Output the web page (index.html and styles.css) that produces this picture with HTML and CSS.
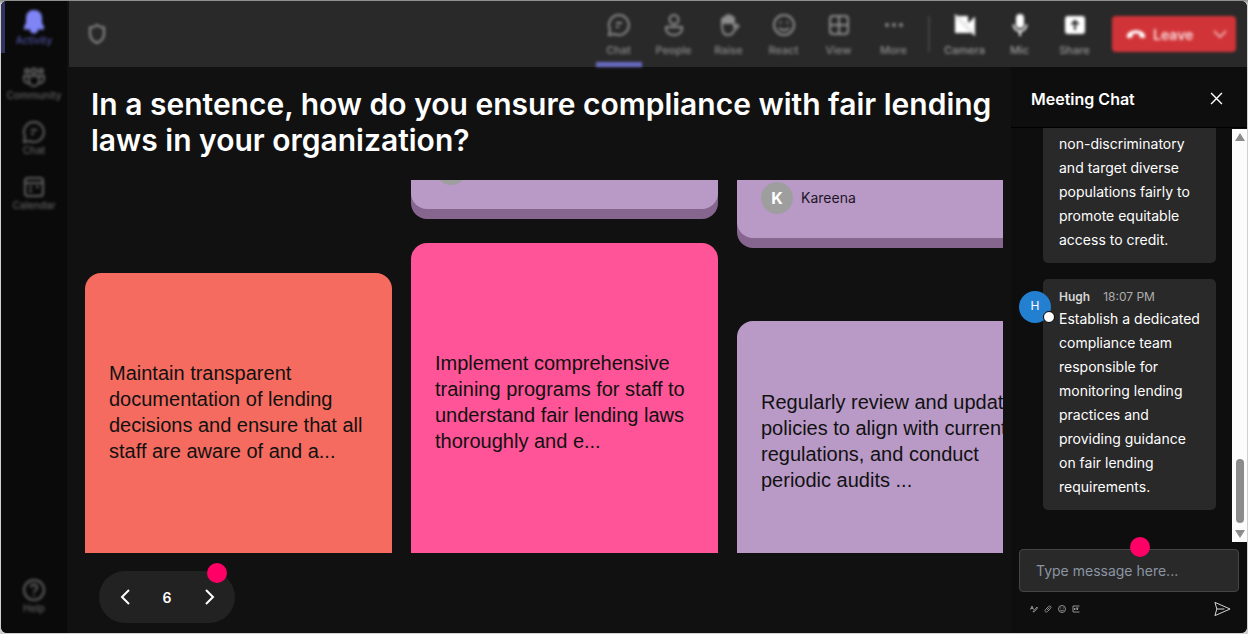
FILE: index.html
```html
<!DOCTYPE html>
<html lang="en">
<head>
    <meta charset="UTF-8">
    <meta name="viewport" content="width=device-width, initial-scale=1.0">
    <title>Meeting</title>
    <link rel="stylesheet" href="styles.css">
</head>
<body>
    <div class="app">
        <!-- Left rail -->
        <nav class="sidebar">
            <button class="nav-item active">
                <svg class="icon" viewBox="0 0 24 24"><path class="fill" d="M12 1C7.500 1 5 4 5 8v5l-2 4v1.500h18V17l-2-4V8c0-4-2.500-7-7-7zM9 19.500h6a3 3 0 0 1-6 0z"/></svg>
                <span>Activity</span>
            </button>
            <button class="nav-item">
                <svg class="icon" viewBox="0 0 24 24"><circle cx="5" cy="6" r="2"/><circle cx="12" cy="6" r="2.500"/><circle cx="19" cy="6" r="2"/><path d="M7 11h10v5a5 5 0 0 1-10 0zM7 11H2v3a4 4 0 0 0 5 4M17 11h5v3a4 4 0 0 1-5 4"/></svg>
                <span>Community</span>
            </button>
            <button class="nav-item">
                <svg class="icon" viewBox="0 0 24 24"><path d="M12 2a10 10 0 1 1-4.500 19L2 22l1-5.500A10 10 0 0 1 12 2zM9 10h6M9 14h3"/></svg>
                <span>Chat</span>
            </button>
            <button class="nav-item">
                <svg class="icon" viewBox="0 0 24 24"><rect x="3" y="3" width="18" height="18" rx="3"/><path d="M3 8h18M7 12h3M14 12h3M7 16h3"/></svg>
                <span>Calendar</span>
            </button>
            <button class="nav-item help">
                <svg class="icon" viewBox="0 0 24 24"><circle cx="12" cy="12" r="10"/><path d="M9 9.500a3 3 0 1 1 4.500 2.500c-1 .600-1.500 1-1.500 2.500M12 16.500v1.500"/></svg>
                <span>Help</span>
            </button>
        </nav>

        <div class="content">
            <header class="topbar">
                <svg class="icon shield" viewBox="0 0 24 24"><path d="M12 3c2.500 2 4.500 2.500 7 2.500V12c0 5-2.500 7-7 9-4.500-2-7-4-7-9V5.500C7.500 5.500 9.500 5 12 3z"/></svg>
                <div class="tools">
                    <button class="tool selected">
                        <svg class="icon" viewBox="0 0 24 24"><path d="M12 2a10 10 0 1 1-4.500 19L2 22l1-5.500A10 10 0 0 1 12 2zM9 10h6M9 14h3"/></svg>
                        <span>Chat</span>
                    </button>
                    <button class="tool">
                        <svg class="icon" viewBox="0 0 24 24"><circle cx="12" cy="6.500" r="4.500"/><path d="M4 14h16v2c0 4-4 6-8 6s-8-2-8-6z"/></svg>
                        <span>People</span>
                    </button>
                    <button class="tool">
                        <svg class="icon" viewBox="0 0 24 24"><path d="M5 13V7h12v7l3-2.500 1.500 1.500-4.500 5c-1.500 3-3 4-6 4-4 0-6-3-6-9z"/><path class="fill" d="M5 10V6l3-2 3-2 3 1 3 2v5z"/></svg>
                        <span>Raise</span>
                    </button>
                    <button class="tool">
                        <svg class="icon" viewBox="0 0 24 24"><circle cx="12" cy="12" r="10"/><path d="M8.500 8.500v2M15.500 8.500v2M7 15c3 3 7 3 10 0"/></svg>
                        <span>React</span>
                    </button>
                    <button class="tool">
                        <svg class="icon" viewBox="0 0 24 24"><rect x="3" y="3" width="18" height="18" rx="3"/><path d="M12 3v18M3 12h18"/></svg>
                        <span>View</span>
                    </button>
                    <button class="tool">
                        <svg class="icon" viewBox="0 0 24 24"><g class="fill"><circle cx="5" cy="12" r="1"/><circle cx="12" cy="12" r="1"/><circle cx="19" cy="12" r="1"/></g></svg>
                        <span>More</span>
                    </button>
                    <i class="divider"></i>
                    <button class="tool device">
                        <svg class="icon" viewBox="0 0 24 24"><path class="fill" d="M7 4h7v6l2 1 5-5v12zM3 6l13 13H3z"/><path d="M2 2l20 20"/></svg>
                        <span>Camera</span>
                    </button>
                    <button class="tool device">
                        <svg class="icon" viewBox="0 0 24 24"><rect class="fill" x="9" y="2" width="6" height="12" rx="3"/><path d="M5.500 11.500a6.500 6.500 0 0 0 13 0M12 18v5"/></svg>
                        <span>Mic</span>
                    </button>
                    <button class="tool device">
                        <svg class="icon" viewBox="0 0 24 24"><rect class="fill" x="3" y="4" width="18" height="16" rx="2"/><path class="cut" d="M12 17V8M8.500 11.500L12 8l3.500 3.500"/></svg>
                        <span>Share</span>
                    </button>
                    <button class="leave">
                        <svg class="phone" viewBox="0 0 24 24"><path d="M1 15c0-10 22-10 22 0l-1 2-6-1v-4c-3-1-5-1-8 0v4l-6 1z"/></svg>
                        <span>Leave</span>
                        <svg class="caret" viewBox="0 0 14 14"><path d="M1 4l6 6 6-6"/></svg>
                    </button>
                </div>
            </header>

            <div class="stage">
                <main class="board-area">
                    <h1>In a sentence, how do you ensure compliance with fair lending laws in your organization?</h1>
                    <section class="board">
                        <div class="column first">
                            <article class="card coral">
                                <p>Maintain transparent documentation of lending decisions and ensure that all staff are aware of and a...</p>
                            </article>
                        </div>
                        <div class="column second">
                            <article class="card-end short">
                                <div class="avatar"></div>
                            </article>
                            <article class="card pink">
                                <p>Implement comprehensive training programs for staff to understand fair lending laws thoroughly and e...</p>
                            </article>
                        </div>
                        <div class="column third">
                            <article class="card-end">
                                <div class="avatar">K</div>
                                <span>Kareena</span>
                            </article>
                            <article class="card lilac">
                                <p>Regularly review and update policies to align with current regulations, and conduct periodic audits ...</p>
                            </article>
                        </div>
                    </section>
                    <div class="pager">
                        <button aria-label="Previous"><svg viewBox="0 0 16 16"><path d="M12 1L5 8l7 7"/></svg></button>
                        <span>6</span>
                        <button aria-label="Next"><svg viewBox="0 0 16 16"><path d="M5 1l7 7-7 7"/></svg></button>
                        <i class="hotspot"></i>
                    </div>
                </main>

                <aside class="chat">
                    <div class="chat-header">
                        <h2>Meeting Chat</h2>
                        <button aria-label="Close"><svg viewBox="0 0 12 12"><path d="M1 1l10 10M11 1L1 11"/></svg></button>
                    </div>
                    <div class="chat-body">
                        <div class="messages">
                            <div class="message">
                                <p>non-discriminatory and target diverse populations fairly to promote equitable access to credit.</p>
                            </div>
                            <div class="message">
                                <div class="chat-avatar">H</div>
                                <div class="meta"><b>Hugh</b><time>18:07 PM</time></div>
                                <p>Establish a dedicated compliance team responsible for monitoring lending practices and providing guidance on fair lending requirements.</p>
                            </div>
                        </div>
                        <div class="scrollbar">
                            <svg viewBox="0 0 10 8"><path d="M5 0l5 8H0z"/></svg>
                            <div class="thumb"></div>
                            <svg viewBox="0 0 10 8"><path d="M5 8l5-8H0z"/></svg>
                        </div>
                    </div>
                    <div class="composer">
                        <input type="text" placeholder="Type message here..." aria-label="Type message here">
                        <i class="hotspot"></i>
                        <div class="composer-tools">
                            <button aria-label="Format"><svg viewBox="0 0 16 16"><path d="M1 9l3-7 3 7M2 7h4M6 14l2-3 6-7 1 2-6 7z"/></svg></button>
                            <button aria-label="Attach"><svg viewBox="0 0 16 16"><path d="M3 9l6-6c3-3 7 1 4 4l-6 6c-3 3-7-1-4-4zM6 10l5-5"/></svg></button>
                            <button aria-label="Emoji"><svg viewBox="0 0 16 16"><circle cx="8" cy="8" r="7"/><path d="M5.500 5v2M10.500 5v2M4.500 10c2 2 5 2 7 0"/></svg></button>
                            <button aria-label="GIF"><svg viewBox="0 0 16 16"><path d="M15 2H2v12h13M5 6v4M8 6v4M8 6h5M11 6v4"/></svg></button>
                            <button class="send" aria-label="Send"><svg viewBox="0 0 18 16"><path d="M1 1l16 7L1 15l2-7zM3 8h8"/></svg></button>
                        </div>
                    </div>
                </aside>
            </div>
        </div>
    </div>
</body>
</html>
```

FILE: styles.css
```css
*,
*::before,
*::after {
    box-sizing: border-box;
}

body {
    margin: 0;
    background: linear-gradient(#858787, #d0d0d0 4px);
    font-family: Inter, "Liberation Sans", sans-serif;
    color: #fff;
}

h1, h2, p {
    margin: 0;
}

button {
    padding: 0;
    border: none;
    background: none;
    color: inherit;
    font-family: inherit;
    cursor: pointer;
}

svg {
    display: block;
    fill: none;
    stroke: currentColor;
    stroke-width: 2;
}

.app {
    display: flex;
    height: 100vh;
    border: 1px solid transparent;
    border-radius: 7px;
    background: #111;
    background-clip: padding-box;
    overflow: hidden;
}

.icon {
    width: 24px;
    height: 24px;
}

.fill {
    fill: currentColor;
}

.cut {
    stroke: #292929;
}

/* Left rail */
.sidebar {
    display: flex;
    flex-direction: column;
    width: 66px;
    padding-bottom: 9px;
    background: #0a0a0a;
    color: #606060;
}

.nav-item {
    display: flex;
    flex-direction: column;
    align-items: center;
    height: 55px;
    padding-top: 9px;
    font-size: 10px;
    font-weight: 500;
    line-height: 12px;
}

.nav-item .icon,
.nav-item span,
.tools,
.shield {
    filter: blur(1.4px);
}

.nav-item.active {
    border-left: 4px solid #33335f;
    padding-right: 4px;
    height: 52px;
    margin-bottom: 3px;
    color: #4f50a0;
}

.nav-item.active .icon {
    color: #7f85f5;
}

.nav-item.help {
    margin-top: auto;
}

.content {
    flex: 1;
    min-width: 0;
    display: flex;
    flex-direction: column;
}

/* Top bar */
.topbar {
    display: flex;
    align-items: center;
    justify-content: space-between;
    height: 66px;
    padding: 0 11px 0 16px;
    margin-left: 2px;
    background: #292929;
    color: #8c8c8c;
}

.tools {
    display: flex;
    align-items: center;
    height: 66px;
}

.tool {
    display: flex;
    flex-direction: column;
    align-items: center;
    width: 55px;
    height: 66px;
    padding-top: 12px;
    font-size: 11px;
    font-weight: 500;
    line-height: 26px;
}

.tool.selected span {
    width: 46px;
    height: 30px;
    border-bottom: 5px solid #6a6cc4;
}

.tool.device {
    color: #999;
}

.tool.device .icon {
    color: #fff;
}

.divider {
    width: 2px;
    height: 36px;
    margin: 0 7px;
    background: #444;
}

.leave {
    display: flex;
    align-items: center;
    width: 124px;
    height: 36px;
    margin-left: 10px;
    padding: 0 9px 0 14px;
    border-radius: 4px;
    background: #d13438;
    color: #fbdcdd;
    font-size: 14px;
    font-weight: 600;
}

.phone {
    width: 20px;
    height: 20px;
    margin-right: 7px;
    fill: #fff;
    stroke: none;
}

.caret {
    width: 14px;
    height: 14px;
    margin-left: auto;
    color: #eda5a7;
}

.stage {
    flex: 1;
    min-height: 0;
    display: flex;
}

/* Question board */
.board-area {
    flex: 1;
    min-width: 0;
    display: flex;
    flex-direction: column;
    padding: 19px 8px 10px 18px;
}

h1 {
    padding-left: 6px;
    font-size: 30px;
    line-height: 36px;
    font-weight: 600;
}

.board {
    flex: 1;
    min-height: 0;
    display: flex;
    gap: 19px;
    margin-top: 22px;
    overflow: hidden;
}

.column {
    flex: 0 0 307px;
    display: flex;
    flex-direction: column;
    gap: 24px;
}

.column.first {
    padding-top: 93px;
}

.column.third {
    gap: 73px;
}

.card {
    flex: 0 0 400px;
    padding: 87px 24px 24px;
    border-radius: 16px;
    color: #111;
    font-family: "Liberation Sans", Arial, sans-serif;
    font-size: 20px;
    line-height: 26px;
}

.second .card {
    padding-top: 107px;
}

.third .card {
    padding-top: 68px;
}

.coral {
    background: #f56b5f;
}

.pink {
    background: #ff5497;
}

.lilac {
    background: #b99ac7;
}

.card-end {
    position: relative;
    z-index: 0;
    flex: none;
    display: flex;
    align-items: flex-end;
    gap: 8px;
    height: 68px;
    padding: 0 24px 34px;
    border-radius: 0 0 16px 16px;
    background: #86658f;
    color: #1c1626;
    font-size: 14px;
    line-height: 32px;
}

/* card face over its darker lower edge */
.card-end::before {
    content: "";
    position: absolute;
    inset: 0 0 10px;
    z-index: -1;
    border-radius: 0 0 16px 16px;
    background: #b99ac7;
}

.card-end.short {
    height: 39px;
}

.avatar {
    width: 32px;
    height: 32px;
    border-radius: 50%;
    background: #9e9e9e;
    color: #fff;
    font-size: 16px;
    font-weight: 700;
    text-align: center;
}

.pager {
    position: relative;
    display: flex;
    align-items: center;
    justify-content: space-between;
    width: 136px;
    height: 52px;
    margin: 18px 0 0 14px;
    padding: 0 18px;
    border-radius: 26px;
    background: #222;
    font-size: 14px;
    font-weight: 600;
}

.pager svg {
    width: 16px;
    height: 16px;
}

.hotspot {
    position: absolute;
    top: -8px;
    right: 8px;
    width: 20px;
    height: 20px;
    border-radius: 50%;
    background: #ff0066;
}

/* Meeting chat */
.chat {
    display: flex;
    flex-direction: column;
    width: 236px;
    background: #0e0e0e;
}

.chat-header {
    display: flex;
    align-items: center;
    justify-content: space-between;
    height: 61px;
    padding: 3px 24px 0 20px;
    border-bottom: 1px solid #000;
}

h2 {
    font-size: 16px;
    font-weight: 600;
}

.chat-header svg {
    width: 13px;
    height: 13px;
    stroke-width: 1.3;
}

.chat-body {
    flex: 1;
    min-height: 0;
    display: flex;
}

.messages {
    flex: 1;
    display: flex;
    flex-direction: column;
    justify-content: flex-end;
    gap: 16px;
    padding: 0 16px 32px 32px;
    overflow: hidden;
}

.message {
    position: relative;
    padding: 8px 16px 11px;
    border-radius: 5px;
    background: #292929;
    font-size: 14px;
    line-height: 24px;
}

.meta {
    display: flex;
    gap: 13px;
    font-size: 12px;
    line-height: 20px;
    color: #d6d6d6;
}

.meta b {
    font-weight: 600;
}

.meta time {
    color: #adadad;
}

.chat-avatar {
    position: absolute;
    left: -24px;
    top: 12px;
    width: 32px;
    height: 32px;
    border-radius: 50%;
    background: #237fd0;
    font-size: 12px;
    line-height: 30px;
    text-align: center;
}

.chat-avatar::after {
    content: "";
    position: absolute;
    right: -4px;
    bottom: 0;
    width: 12px;
    height: 12px;
    border: 1px solid #000;
    border-radius: 50%;
    background: #fff;
}

.scrollbar {
    display: flex;
    flex-direction: column;
    align-items: center;
    justify-content: space-between;
    width: 15px;
    margin-top: 1px;
    padding: 4px 0;
    background: #fcfcfc;
}

.scrollbar svg {
    width: 10px;
    height: 8px;
    fill: #8b8b8b;
    stroke: none;
}

.thumb {
    width: 8px;
    height: 64px;
    margin: auto 0 7px;
    border-radius: 4px;
    background: #8b8b8b;
}

.composer {
    position: relative;
    padding: 7px 8px 16px;
}

.composer input {
    width: 100%;
    height: 43px;
    padding: 0 16px;
    border: 1px solid #454545;
    border-radius: 4px;
    background: #292929;
    color: #fff;
    font-family: inherit;
    font-size: 14px;
}

.composer input::placeholder {
    color: #8b95a3;
}

.composer .hotspot {
    top: -5px;
    right: 97px;
}

.composer-tools {
    display: flex;
    align-items: center;
    gap: 6px;
    margin-top: 9px;
    padding: 0 8px 0 11px;
    color: #909090;
}

.composer-tools svg {
    width: 8px;
    height: 8px;
}

.composer-tools .send {
    margin-left: auto;
    color: #e0e0e0;
}

.composer-tools .send svg {
    width: 17px;
    height: 16px;
    stroke-width: 1;
}
```
